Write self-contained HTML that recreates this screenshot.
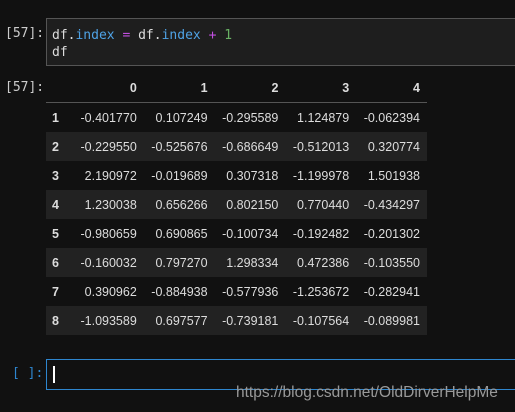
<!DOCTYPE html><html><head><style>
body{margin:0;width:515px;height:412px;background:#111;overflow:hidden;position:relative;font-family:"Liberation Sans",sans-serif;color:#ddd}
.p{position:absolute;font-family:"DejaVu Sans Mono",monospace;font-size:13px;color:#ccc}
.code{position:absolute;left:46px;top:18px;width:475px;height:48px;border:1px solid #555;background:#1e1e1e;box-sizing:border-box;font-family:"DejaVu Sans Mono",monospace;font-size:13px;line-height:17px;padding:8px 5px;color:#ddd}
.b{color:#4fa3e6}.m{color:#c14fe0}.g{color:#69b164}
table{position:absolute;left:46px;top:74px;border-collapse:collapse;font-size:12.5px;width:381px}
th,td{text-align:right;padding:0 7px 0 0;height:29px}
thead th{height:28px;border-bottom:1px solid #555;font-weight:bold}
tbody th{text-align:left;padding-left:6px;font-weight:bold;width:14px}
tbody tr:nth-child(even){background:#222}
.in{position:absolute;left:46px;top:359px;width:475px;height:31px;border:1px solid #2e86cf;box-sizing:border-box;background:#111}
.cur{position:absolute;left:6px;top:6px;width:2px;height:17px;background:#fff}
.wm{position:absolute;left:236px;top:384px;font-size:15.5px;color:#999}
</style></head><body>
<div class="p" style="left:5px;top:26px">[57]:</div>
<div class="code">df.<span class="b">index</span> <span class="m">=</span> df.<span class="b">index</span> <span class="m">+</span> <span class="g">1</span><br>df</div>
<div class="p" style="left:5px;top:80px">[57]:</div>
<table><thead><tr><th></th><th>0</th><th>1</th><th>2</th><th>3</th><th>4</th></tr></thead><tbody>
<tr><th>1</th><td>-0.401770</td><td>0.107249</td><td>-0.295589</td><td>1.124879</td><td>-0.062394</td></tr>
<tr><th>2</th><td>-0.229550</td><td>-0.525676</td><td>-0.686649</td><td>-0.512013</td><td>0.320774</td></tr>
<tr><th>3</th><td>2.190972</td><td>-0.019689</td><td>0.307318</td><td>-1.199978</td><td>1.501938</td></tr>
<tr><th>4</th><td>1.230038</td><td>0.656266</td><td>0.802150</td><td>0.770440</td><td>-0.434297</td></tr>
<tr><th>5</th><td>-0.980659</td><td>0.690865</td><td>-0.100734</td><td>-0.192482</td><td>-0.201302</td></tr>
<tr><th>6</th><td>-0.160032</td><td>0.797270</td><td>1.298334</td><td>0.472386</td><td>-0.103550</td></tr>
<tr><th>7</th><td>0.390962</td><td>-0.884938</td><td>-0.577936</td><td>-1.253672</td><td>-0.282941</td></tr>
<tr><th>8</th><td>-1.093589</td><td>0.697577</td><td>-0.739181</td><td>-0.107564</td><td>-0.089981</td></tr>
</tbody></table>
<div class="p" style="left:12px;top:366px;color:#2e86cf">[ ]:</div>
<div class="in"><div class="cur"></div></div>
<div class="wm">https://blog.csdn.net/OldDirverHelpMe</div>
</body></html>
